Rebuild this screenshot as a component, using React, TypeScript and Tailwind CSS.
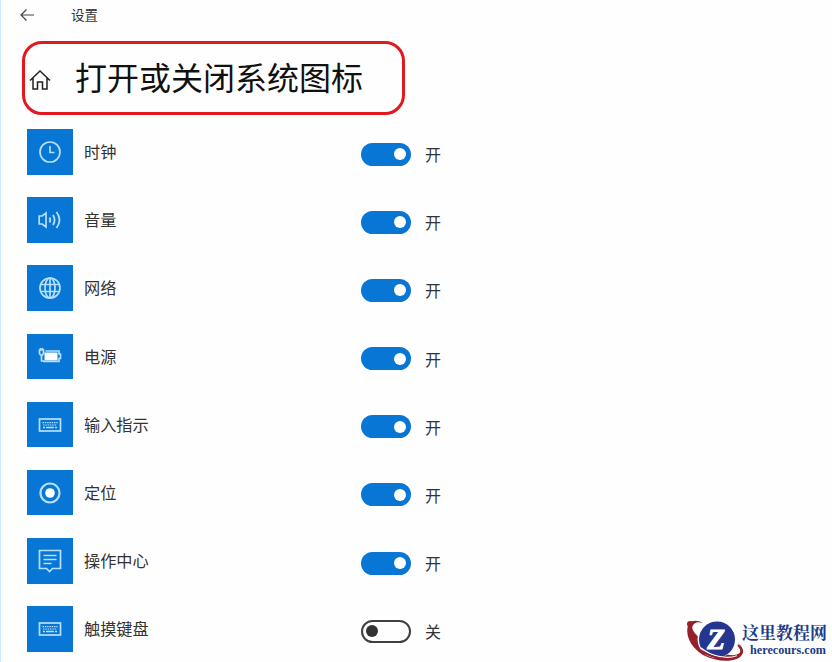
import React from 'react';

const ClockIcon = () => (
  <>
    <circle cx="12" cy="12" r="10" />
    <path d="M12 6v6.500h4.500" />
  </>
);

const VolumeIcon = () => (
  <>
    <path d="M1.200 8h3l3.800-3v14l-3.800-3h-3z" />
    <path d="M11.500 9.500q1.500 2.500 0 5M15 7q3.200 5 0 10M18.500 4q6 8 0 16" strokeWidth="1.800" />
  </>
);

const GlobeIcon = () => (
  <>
    <circle cx="12" cy="12" r="10" />
    <ellipse cx="12" cy="12" rx="5" ry="10" />
    <path d="M12 2v20M3.200 8.500h17.600M3.200 15.500h17.600" />
  </>
);

const PowerIcon = () => (
  <>
    <path d="M1.500 6h4v3.500l-1 1.500h-2l-1-1.500zM2.500 4v2M4.500 4v2M3.500 11v6h3" />
    <path d="M7.500 7h13.500v3h1.500v4.500h-1.500v3h-16" />
    <rect x="6.500" y="8.500" width="13" height="8" fill="white" stroke="none" />
  </>
);

const KeyboardIcon = () => (
  <>
    <rect x="1.500" y="6" width="21" height="12" />
    <path d="M4.500 9.700h15M5 12h14" strokeWidth="1.200" strokeDasharray="1.500 .8" />
    <path d="M5 14.500h2M8 14.500h8M17 14.500h2" strokeWidth="1.300" />
  </>
);

const LocationIcon = () => (
  <>
    <circle cx="12" cy="12" r="9.500" strokeWidth="2.200" />
    <circle cx="12" cy="12" r="4.800" fill="white" stroke="none" />
  </>
);

const MessageIcon = () => (
  <>
    <path d="M1.500 1.500h21v18h-8l-3 3-3-3h-7z" />
    <path d="M5.500 6.500h13M5.500 10.500h13M5.500 14.500h8" />
  </>
);

const items = [
  { name: '时钟', icon: <ClockIcon />, on: true },
  { name: '音量', icon: <VolumeIcon />, on: true },
  { name: '网络', icon: <GlobeIcon />, on: true },
  { name: '电源', icon: <PowerIcon />, on: true },
  { name: '输入指示', icon: <KeyboardIcon />, on: true },
  { name: '定位', icon: <LocationIcon />, on: true },
  { name: '操作中心', icon: <MessageIcon />, on: true },
  { name: '触摸键盘', icon: <KeyboardIcon />, on: false },
];

const Toggle = ({ on }: { on: boolean }) => (
  <button
    role="switch"
    aria-checked={on}
    className={
      on
        ? 'flex h-[23px] w-[50px] items-center justify-end rounded-full bg-[#0876d5] pr-[5px]'
        : 'flex h-[23px] w-[50px] items-center rounded-full border-2 border-[#404040] pl-[3px]'
    }
  >
    <span className={on ? 'h-3 w-3 rounded-full bg-white' : 'h-3 w-3 rounded-full bg-[#333]'} />
  </button>
);

const Logo = () => (
  <div className="absolute left-[683px] top-[618px] flex">
    <svg width="60" height="44" viewBox="0 0 60 44">
      <path d="M5 5C0 16 6 29 19 37c13 7 32 8 38 1 4-4 2-9-3-13 4 5 4 9 0 11-6 3-18 0-28-9C11 18 5 10 10 6c2-2 5-2 9-1C14 2 8 2 5 5z" fill="#971f28" />
      <circle cx="6" cy="6" r="3" fill="#971f28" />
      <circle cx="32.500" cy="21" r="19" fill="#fefefe" />
      <circle cx="33" cy="21.500" r="18" fill="#25368f" />
      <path d="M17 30c10 8 25 12 36 8" fill="none" stroke="#fefefe" strokeWidth="1.500" />
      <path d="M16 32c11 8 28 11 37 7 6-3 5-8 1-12" fill="none" stroke="#971f28" strokeWidth="1.800" />
      <text x="32" y="31" textAnchor="middle" className="fill-white stroke-white font-['Liberation_Serif',serif] text-[29px] font-bold italic">Z</text>
    </svg>
    <div className="flex flex-col whitespace-nowrap text-[#203b86]">
      <span className="-ml-[2px] mt-[3px] font-['Noto_Serif_CJK_SC','Noto_Sans_CJK_SC',serif] text-[17px] font-bold leading-[21px]">这里教程网</span>
      <span className="ml-[6px] mt-[2px] font-['Liberation_Serif',serif] text-[12.200px] font-bold leading-[13px]">herecours.com</span>
    </div>
  </div>
);

export default function App() {
  return (
    <div className="relative h-[662px] w-[832px] overflow-hidden border-l border-[#c9eff6] bg-[#fefefe] font-['Noto_Sans_CJK_SC',sans-serif] text-[#333]">
      <header className="flex h-[41px] items-start pl-[19px] pt-1">
        <svg className="mt-1" width="14" height="14" viewBox="0 0 14 14" fill="none" stroke="#444" strokeWidth="1.200">
          <path d="M14 7H1M6.500 1.500L1 7l5.500 5.500" />
        </svg>
        <span className="ml-[37px] text-[13.500px] leading-5">设置</span>
      </header>
      <div className="ml-[21px] flex h-[74px] w-[383px] items-center rounded-[20px] border-[3px] border-[#e2181e]">
        <svg className="ml-1 mt-1" width="22" height="22" viewBox="0 0 22 22" fill="none" stroke="#222" strokeWidth="1.500">
          <path d="M1 11.500L11 2l10 9.500M4 9v11h4.500v-7h5v7H18V9" />
        </svg>
        <h1 className="-mt-[5px] ml-6 whitespace-nowrap text-[32px] font-normal leading-10 text-[#111]">打开或关闭系统图标</h1>
      </div>
      <ul className="ml-[26px] mt-[14px]">
        {items.map((item) => (
          <li key={item.name} className="flex h-[68.200px] items-start">
            <div className="flex h-[45.500px] w-[46px] items-center justify-center bg-[#0876d5]">
              <svg width="24" height="24" viewBox="0 0 24 24" fill="none" stroke="#b5e0ff" strokeWidth="1.700">
                {item.icon}
              </svg>
            </div>
            <span className="ml-[11px] mt-[10px] w-[277px] text-[16.200px] leading-6">{item.name}</span>
            <div className="mt-[13px] flex items-center">
              <Toggle on={item.on} />
              <span className="ml-[14px] text-base leading-6">{item.on ? '开' : '关'}</span>
            </div>
          </li>
        ))}
      </ul>
      <Logo />
    </div>
  );
}
